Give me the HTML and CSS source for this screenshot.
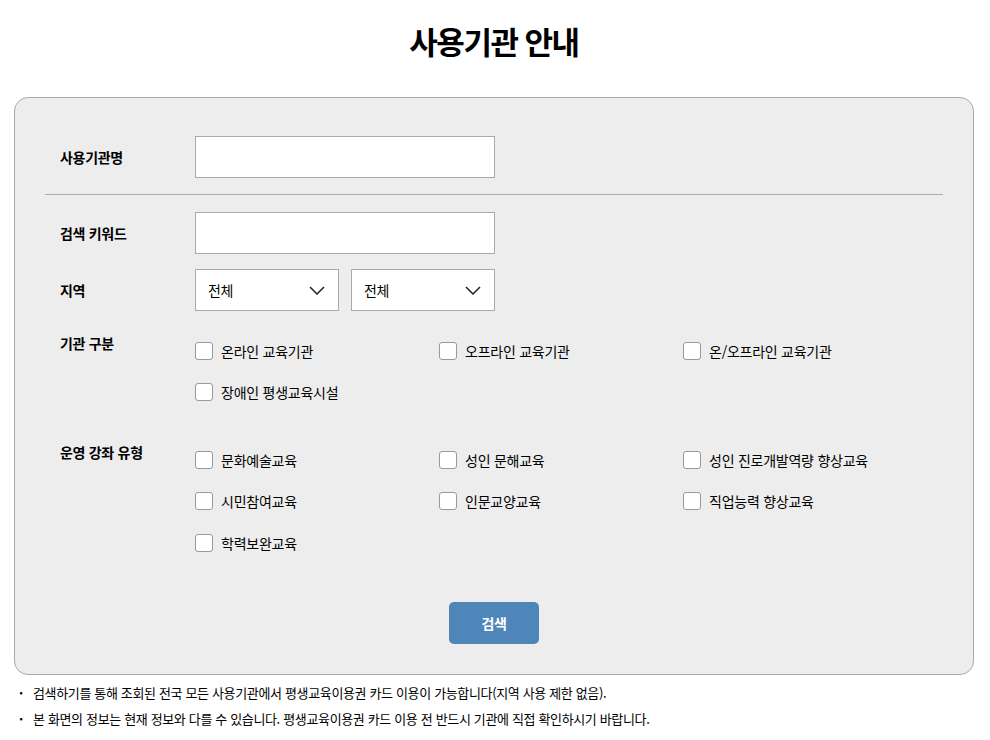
FILE: index.html
```html
<!DOCTYPE html>
<html lang="ko">
<head>
<meta charset="utf-8">
<title>사용기관 안내</title>
<link rel="stylesheet" href="styles.css">
</head>
<body>
<h1 class="title">사용기관 안내</h1>
<div class="panel">
  <div class="row">
    <label class="label">사용기관명</label>
    <input class="text-input" type="text">
  </div>
  <hr class="divider">
  <div class="row row-keyword">
    <label class="label">검색 키워드</label>
    <input class="text-input" type="text">
  </div>
  <div class="row row-region">
    <label class="label">지역</label>
    <div class="selects">
      <div class="select"><span>전체</span><svg width="16" height="9" viewBox="0 0 16 9"><path d="M1 1 L8 8 L15 1" fill="none" stroke="#222" stroke-width="1.5"/></svg></div>
      <div class="select"><span>전체</span><svg width="16" height="9" viewBox="0 0 16 9"><path d="M1 1 L8 8 L15 1" fill="none" stroke="#222" stroke-width="1.5"/></svg></div>
    </div>
  </div>
  <div class="group group-type">
    <div class="label group-label">기관 구분</div>
    <div class="checks">
      <label class="check"><span class="box"></span>온라인 교육기관</label>
      <label class="check"><span class="box"></span>오프라인 교육기관</label>
      <label class="check"><span class="box"></span>온/오프라인 교육기관</label>
      <label class="check"><span class="box"></span>장애인 평생교육시설</label>
    </div>
  </div>
  <div class="group group-course">
    <div class="label group-label">운영 강좌 유형</div>
    <div class="checks">
      <label class="check"><span class="box"></span>문화예술교육</label>
      <label class="check"><span class="box"></span>성인 문해교육</label>
      <label class="check"><span class="box"></span>성인 진로개발역량 향상교육</label>
      <label class="check"><span class="box"></span>시민참여교육</label>
      <label class="check"><span class="box"></span>인문교양교육</label>
      <label class="check"><span class="box"></span>직업능력 향상교육</label>
      <label class="check"><span class="box"></span>학력보완교육</label>
    </div>
  </div>
  <div class="actions">
    <button class="btn" type="button">검색</button>
  </div>
</div>
<ul class="notes">
  <li>검색하기를 통해 조회된 전국 모든 사용기관에서 평생교육이용권 카드 이용이 가능합니다(지역 사용 제한 없음).</li>
  <li>본 화면의 정보는 현재 정보와 다를 수 있습니다. 평생교육이용권 카드 이용 전 반드시 기관에 직접 확인하시기 바랍니다.</li>
</ul>
</body>
</html>
```

FILE: styles.css
```css
* { box-sizing: border-box; }
body {
  margin: 0;
  padding: 0 16px 0 14px;
  background: #fff;
  color: #000;
  font-family: "Noto Sans CJK KR", "Noto Sans", sans-serif;
}
.title {
  margin: 0;
  padding-top: 18px;
  height: 97px;
  text-align: center;
  font-size: 31px;
  font-weight: 700;
  letter-spacing: -1.5px;
  line-height: 46px;
  color: #000;
}
.panel {
  width: 960px;
  background: #ededed;
  border: 1px solid #aaa;
  border-radius: 14px;
  padding: 38px 30px 30px;
}
.row {
  display: flex;
  align-items: center;
  padding-left: 15px;
}
.label {
  width: 135px;
  flex: none;
  font-size: 14px;
  font-weight: 700;
  letter-spacing: -0.3px;
  color: #000;
}
.text-input {
  width: 300px;
  height: 42px;
  border: 1px solid #aaa;
  background: #fff;
  margin: 0;
  padding: 0 10px;
  outline: none;
}
.divider {
  border: 0;
  border-top: 1px solid #aaa;
  margin: 16px 0 17px;
}
.row-region { margin-top: 15px; }
.selects { display: flex; gap: 12px; }
.select {
  width: 144px;
  height: 42px;
  background: #fff;
  border: 1px solid #aaa;
  display: flex;
  align-items: center;
  justify-content: space-between;
  padding: 0 13px 0 12px;
  font-size: 14px;
  letter-spacing: -0.3px;
}
.group {
  display: flex;
  align-items: flex-start;
  padding-left: 15px;
}
.group-type { margin-top: 19px; }
.group-course { margin-top: 26px; }
.group-label { padding-top: 3px; line-height: 20px; }
.checks {
  display: grid;
  grid-template-columns: 244px 244px 244px;
  grid-auto-rows: 41.5px;
  flex: 1;
}
.check {
  display: flex;
  align-items: center;
  gap: 8px;
  font-size: 14px;
  letter-spacing: -0.25px;
  color: #000;
}
.box {
  width: 18px;
  height: 18px;
  background: #fff;
  border: 1px solid #999;
  border-radius: 3px;
  flex: none;
}
.actions {
  display: flex;
  justify-content: center;
  margin-top: 38px;
}
.btn {
  width: 90px;
  height: 42px;
  border: 0;
  border-radius: 5px;
  background: #4f86ba;
  color: #fff;
  font-family: inherit;
  font-size: 14px;
  font-weight: 700;
  letter-spacing: -0.5px;
}
.notes {
  list-style: none;
  margin: 5px 0 0;
  padding: 0 0 0 5px;
}
.notes li {
  position: relative;
  padding-left: 14px;
  font-size: 13px;
  letter-spacing: -0.35px;
  line-height: 26px;
  color: #000;
}
.notes li::before {
  content: "·";
  position: absolute;
  left: 0;
  top: 0;
  font-weight: 700;
}
```
